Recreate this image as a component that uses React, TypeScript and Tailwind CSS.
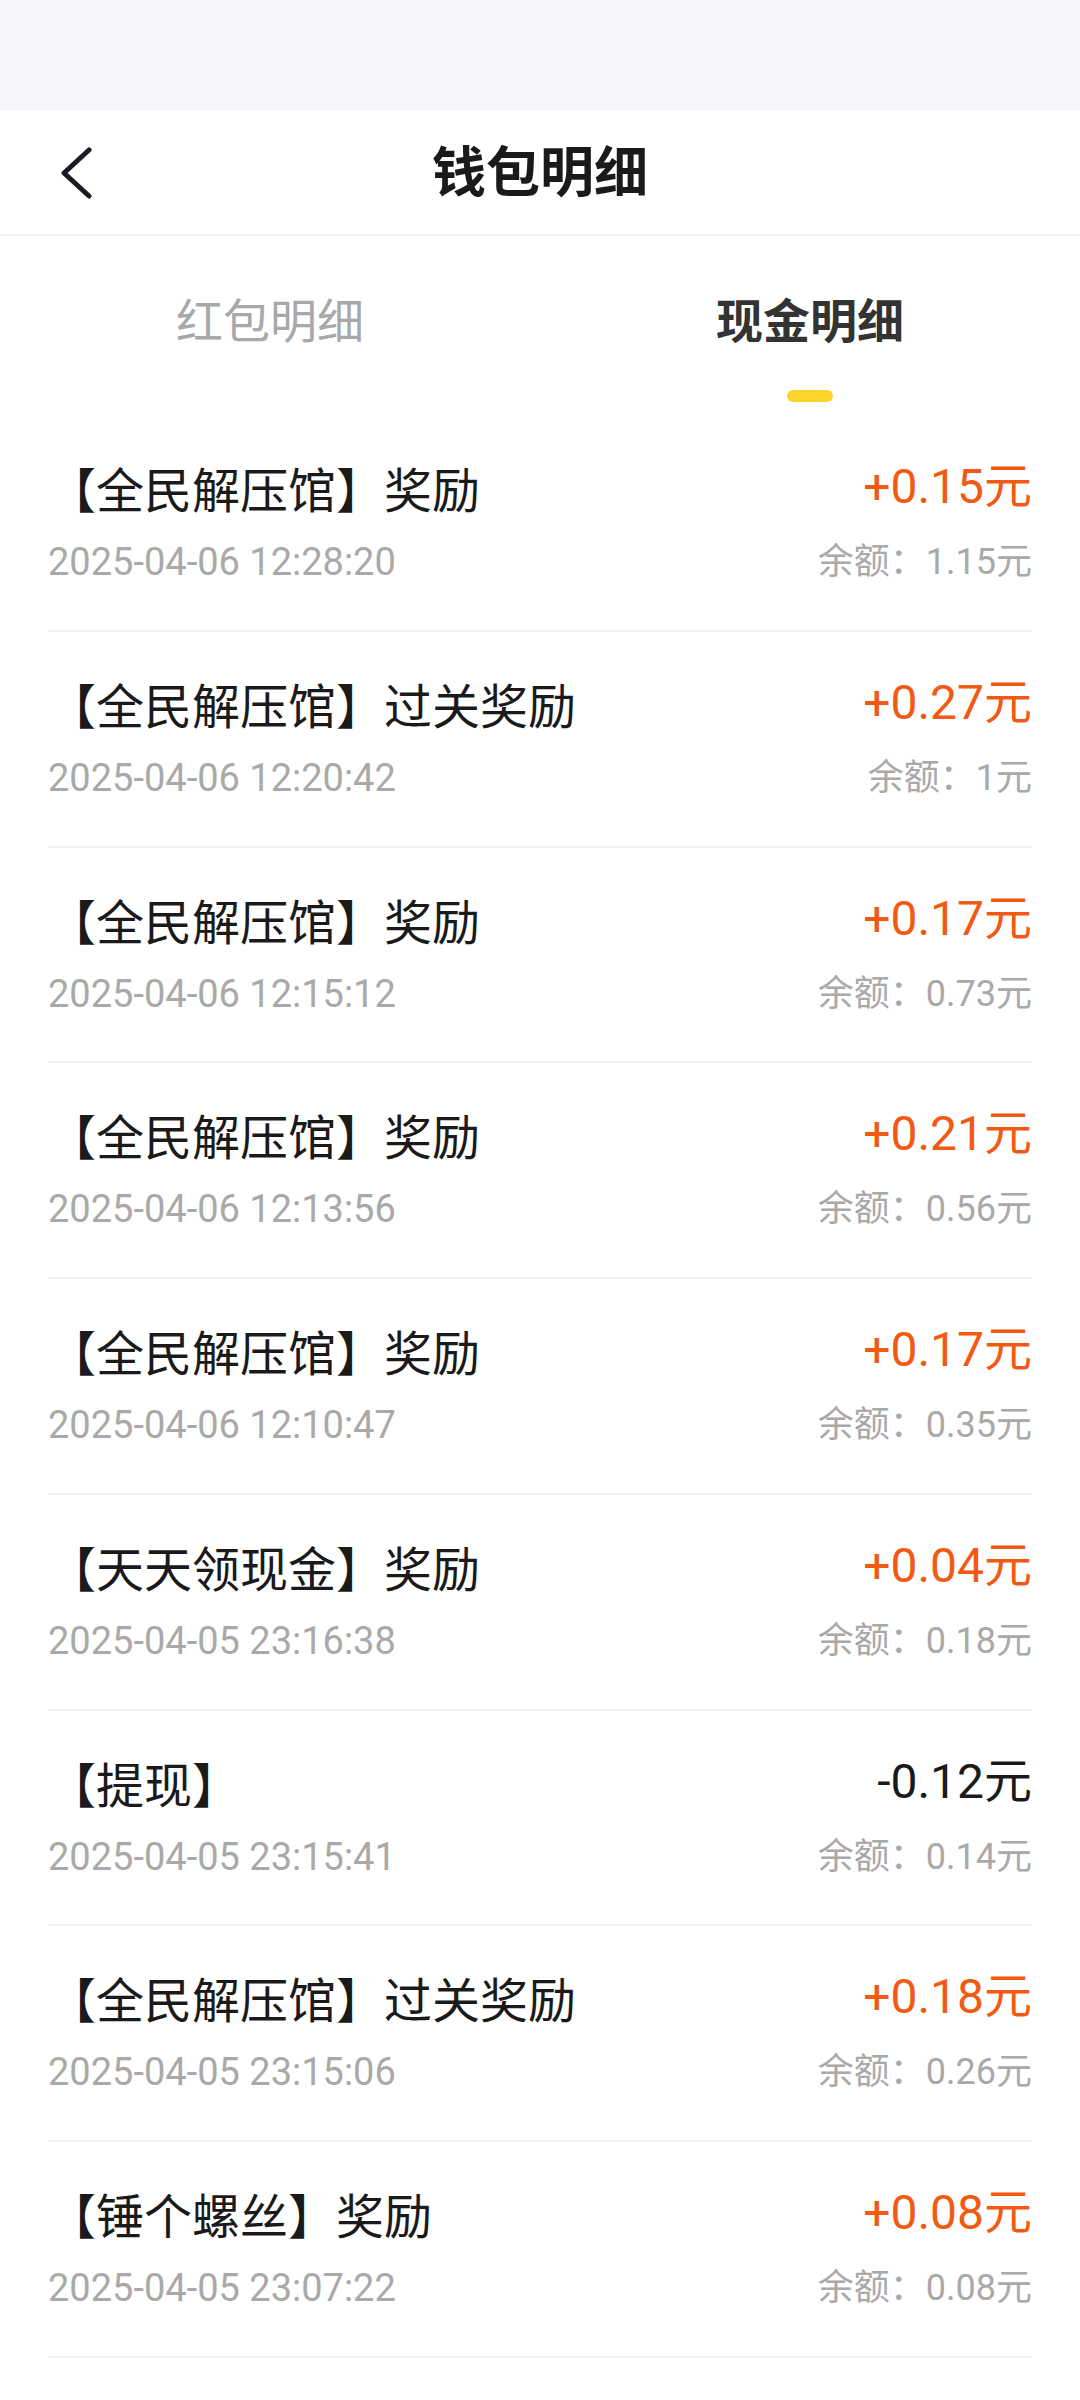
import React, { useState } from "react";

interface Record {
  title: string;
  time: string;
  amount: string;
  balance: string;
}

const records: Record[] = [
  { title: "【全民解压馆】奖励", time: "2025-04-06 12:28:20", amount: "+0.15元", balance: "1.15元" },
  { title: "【全民解压馆】过关奖励", time: "2025-04-06 12:20:42", amount: "+0.27元", balance: "1元" },
  { title: "【全民解压馆】奖励", time: "2025-04-06 12:15:12", amount: "+0.17元", balance: "0.73元" },
  { title: "【全民解压馆】奖励", time: "2025-04-06 12:13:56", amount: "+0.21元", balance: "0.56元" },
  { title: "【全民解压馆】奖励", time: "2025-04-06 12:10:47", amount: "+0.17元", balance: "0.35元" },
  { title: "【天天领现金】奖励", time: "2025-04-05 23:16:38", amount: "+0.04元", balance: "0.18元" },
  { title: "【提现】", time: "2025-04-05 23:15:41", amount: "-0.12元", balance: "0.14元" },
  { title: "【全民解压馆】过关奖励", time: "2025-04-05 23:15:06", amount: "+0.18元", balance: "0.26元" },
  { title: "【锤个螺丝】奖励", time: "2025-04-05 23:07:22", amount: "+0.08元", balance: "0.08元" },
];

const cjk = "font-['Noto_Sans_CJK_SC',sans-serif]";
const num = "font-['Roboto','Noto_Sans_CJK_SC',sans-serif]";

const App: React.FC = () => {
  const [tab, setTab] = useState(1);

  return (
    <div className={`w-[1080px] min-h-[2400px] bg-white ${cjk}`}>
      {/* Status bar */}
      <div className="h-[110px] bg-[#f5f6fa]" />

      {/* Header */}
      <div className="relative h-[126px] flex items-center justify-center pb-[6px] border-b-2 border-[#f3f3f3]">
        <button className="absolute left-[52px] top-[29px] p-1">
          <svg width="40" height="56" viewBox="0 0 40 56">
            <path
              d="M33 7 L8 30 L33 53"
              fill="none"
              stroke="#1b1b24"
              strokeWidth="5"
              strokeLinecap="round"
              strokeLinejoin="round"
            />
          </svg>
        </button>
        <h1 className="text-[54px] leading-[62px] font-bold text-[#1a1a1a]">钱包明细</h1>
      </div>

      {/* Tabs */}
      <div className="grid grid-cols-2 h-[180px]">
        {["红包明细", "现金明细"].map((label, i) => (
          <button
            key={label}
            onClick={() => setTab(i)}
            className="flex flex-col items-center pt-[54px]"
          >
            <span
              className={`text-[47px] leading-[56px] ${
                tab === i ? "font-bold text-[#333333]" : "text-[#a8a8a8]"
              }`}
            >
              {label}
            </span>
            <span
              className={`mt-[44px] w-[46px] h-[12px] rounded-full ${
                tab === i ? "bg-[#fcd52c]" : "bg-transparent"
              }`}
            />
          </button>
        ))}
      </div>

      {/* Records */}
      <div className="px-12">
        {records.map((r, idx) => (
          <div
            key={idx}
            className="h-[215.75px] border-b-2 border-[#f0f0f0] flex justify-between pt-[43px]"
          >
            <div className="flex flex-col">
              <span className="text-[48px] leading-[56px] text-[#1a1a1a]">{r.title}</span>
              <span className={`mt-[25px] text-[38px] leading-[44px] text-[#a9a9a9] ${num}`}>
                {r.time}
              </span>
            </div>
            <div className="flex flex-col items-end">
              <span
                className={`text-[48px] leading-[56px] ${num} ${
                  r.amount.startsWith("-") ? "text-[#1a1a1a]" : "text-[#f25a14]"
                }`}
              >
                {r.amount}
              </span>
              <span className={`mt-[25px] text-[36px] leading-[44px] text-[#a9a9a9] ${num}`}>
                余额：{r.balance}
              </span>
            </div>
          </div>
        ))}
      </div>
    </div>
  );
};

export default App;
